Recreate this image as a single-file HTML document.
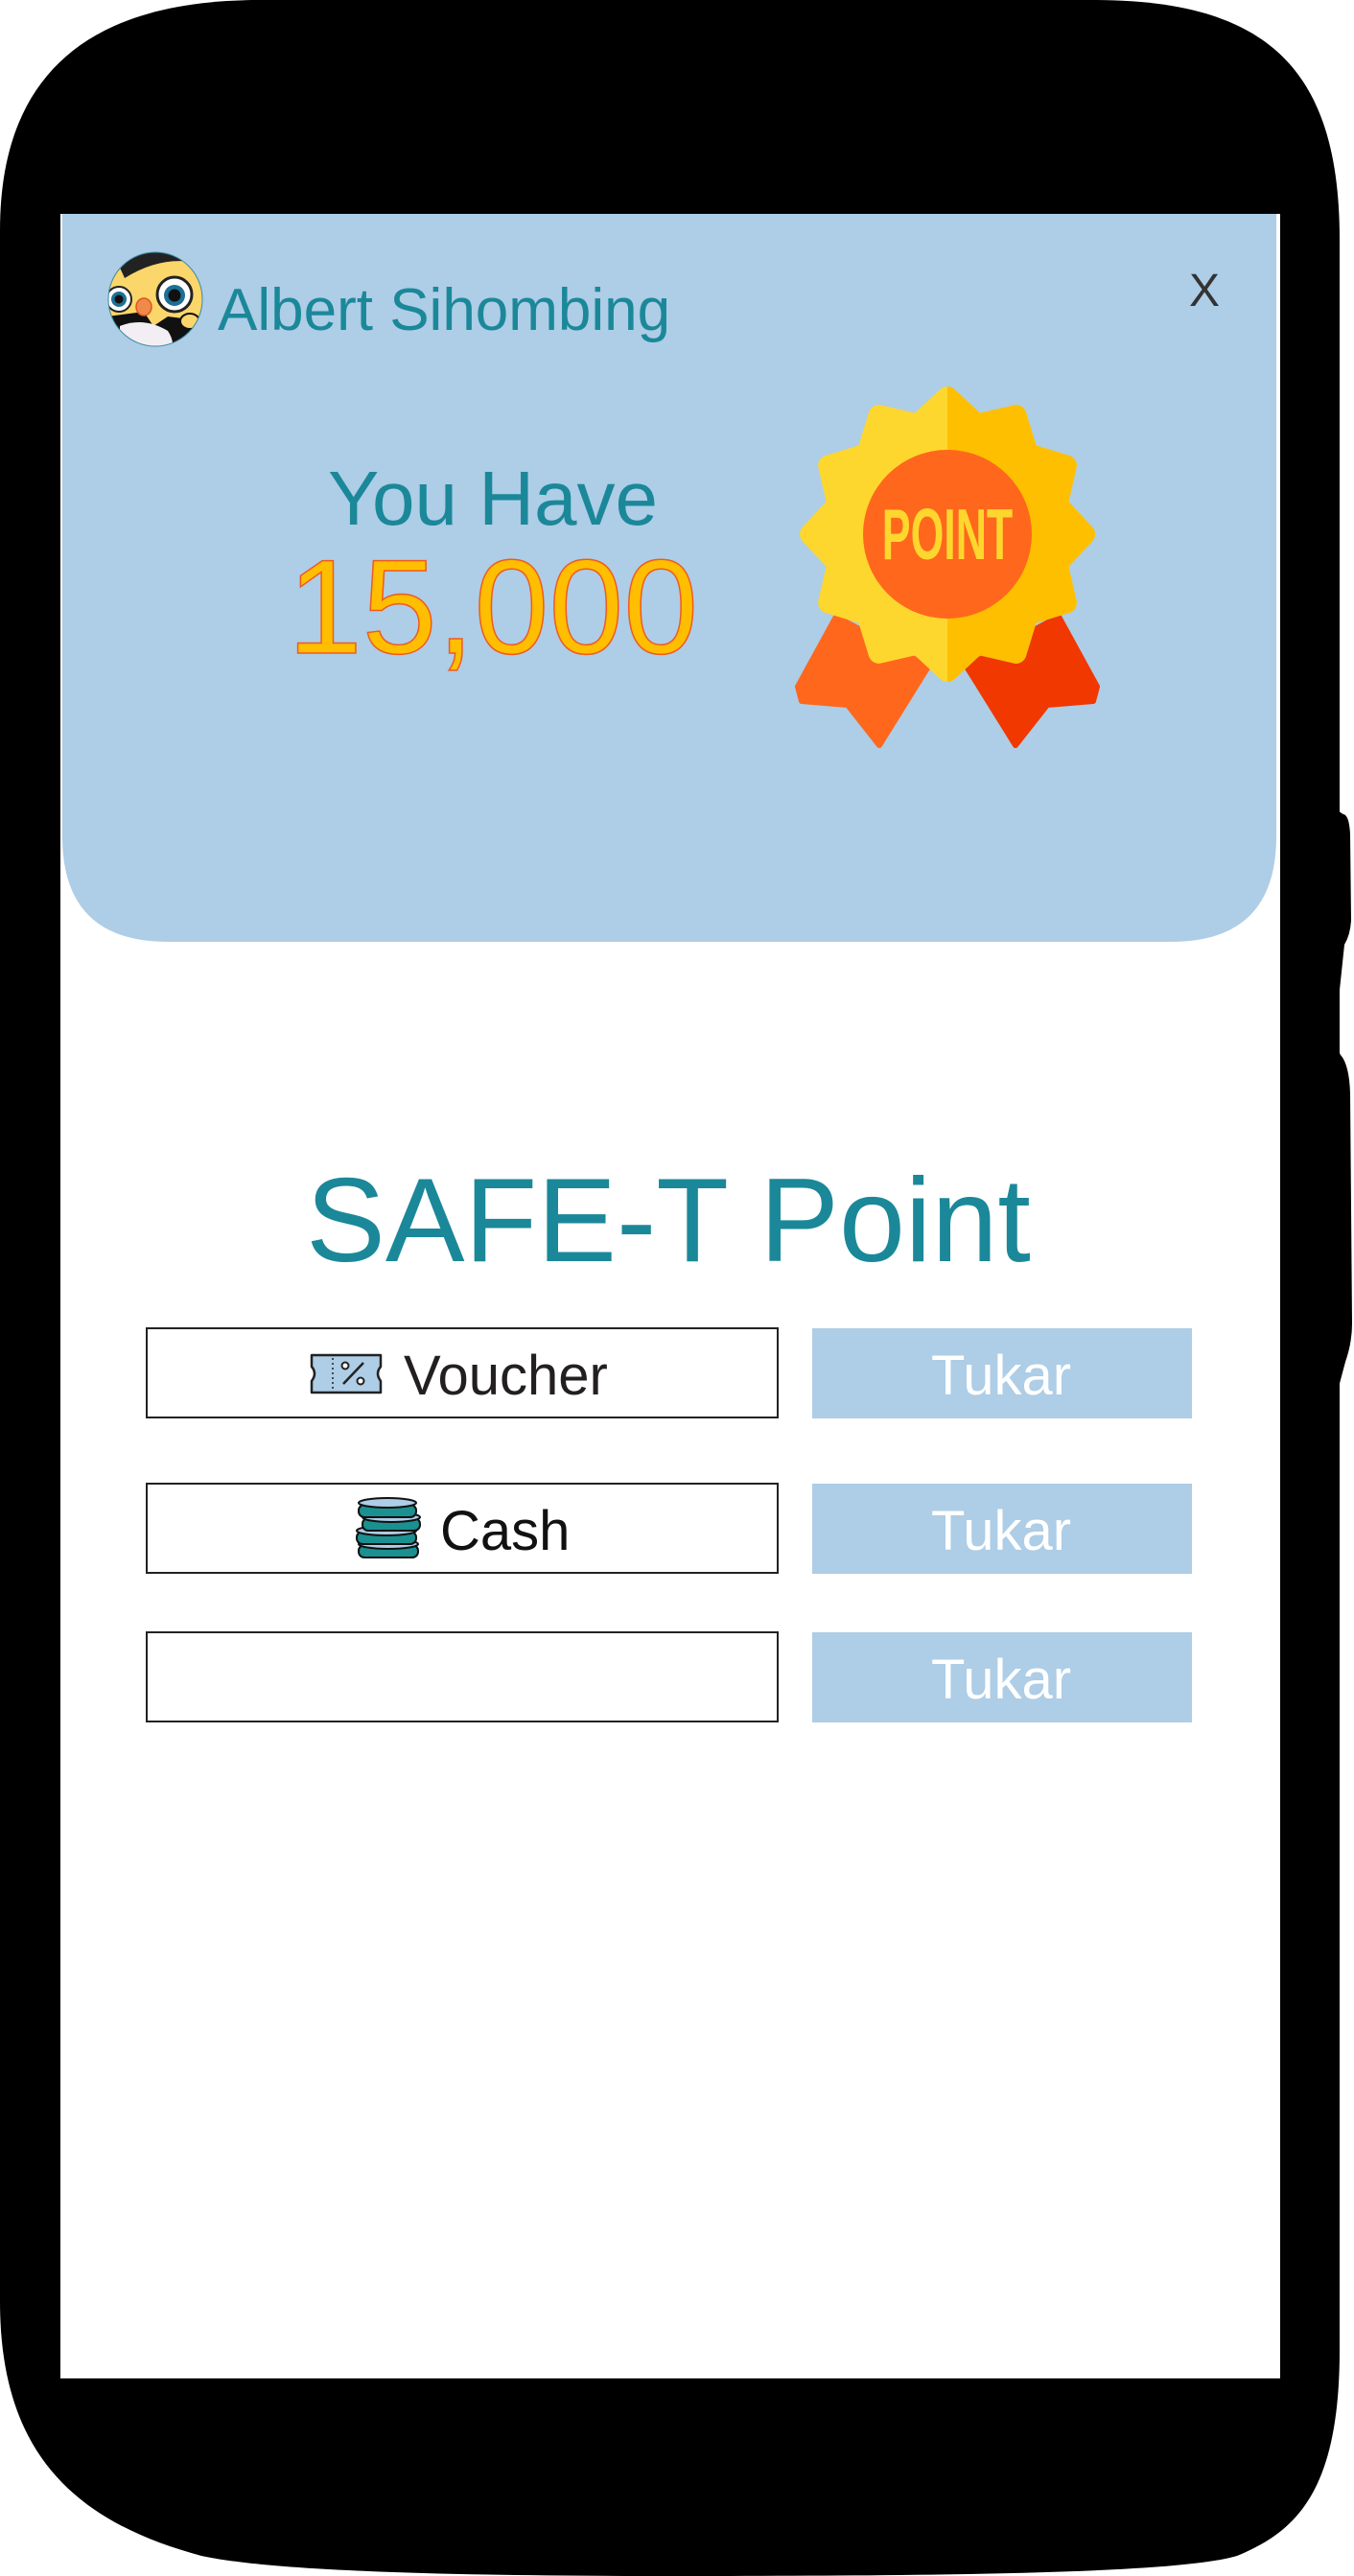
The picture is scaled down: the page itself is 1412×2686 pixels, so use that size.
<!DOCTYPE html>
<html><head><meta charset="utf-8"><style>
html,body{margin:0;padding:0;background:#fff;width:1412px;height:2686px;overflow:hidden}
svg{display:block}
text{font-family:"Liberation Sans",sans-serif}
</style></head><body>
<svg width="1412" height="2686" viewBox="0 0 1412 2686" xmlns="http://www.w3.org/2000/svg">
<defs>
<clipPath id="rh"><rect x="988" y="380" width="200" height="420"/></clipPath>
<clipPath id="av"><circle cx="162" cy="312" r="49"/></clipPath>
<g id="star">
 <circle cx="988" cy="557" r="124"/>
 <g stroke-linejoin="round" stroke-width="22">
  <polygon points="988,414 958,442 1018,442" transform="rotate(0 988 557)"/>
  <polygon points="988,414 958,442 1018,442" transform="rotate(30 988 557)"/>
  <polygon points="988,414 958,442 1018,442" transform="rotate(60 988 557)"/>
  <polygon points="988,414 958,442 1018,442" transform="rotate(90 988 557)"/>
  <polygon points="988,414 958,442 1018,442" transform="rotate(120 988 557)"/>
  <polygon points="988,414 958,442 1018,442" transform="rotate(150 988 557)"/>
  <polygon points="988,414 958,442 1018,442" transform="rotate(180 988 557)"/>
  <polygon points="988,414 958,442 1018,442" transform="rotate(210 988 557)"/>
  <polygon points="988,414 958,442 1018,442" transform="rotate(240 988 557)"/>
  <polygon points="988,414 958,442 1018,442" transform="rotate(270 988 557)"/>
  <polygon points="988,414 958,442 1018,442" transform="rotate(300 988 557)"/>
  <polygon points="988,414 958,442 1018,442" transform="rotate(330 988 557)"/>
 </g>
</g>
</defs>
<!-- phone body -->
<path d="M270 0 L1140 0 C1320 0 1397 70 1397 250 L1397 2450 C1397 2600 1350 2640 1290 2665 C1230 2683 1000 2686 700 2686 C450 2686 280 2680 210 2665 C80 2630 0 2560 0 2400 L0 240 C0 80 90 0 270 0 Z" fill="#000"/>
<path d="M1390 830 Q1392 845 1401 849 Q1407 850 1408 870 L1409 960 Q1408 975 1402 985 L1393 1070 Q1392 1090 1398 1100 Q1407 1110 1408 1140 L1410 1380 Q1410 1400 1403 1420 L1395 1450 L1380 1450 L1380 830 Z" fill="#000"/>
<!-- screen -->
<rect x="63" y="223" width="1272" height="2257" fill="#fff"/>
<path d="M65 223 L1331 223 L1331 872 Q1331 982 1221 982 L175 982 Q65 982 65 872 Z" fill="#aecde6"/>
<!-- avatar -->
<g clip-path="url(#av)">
 <circle cx="162" cy="312" r="49" fill="#fbd66a"/>
 <path d="M110 290 Q150 250 215 270 L215 262 Q160 235 110 275 Z" fill="#222"/>
 <path d="M120 268 Q165 235 210 275 Q170 265 130 290 Z" fill="#222"/>
 <path d="M112 330 L150 325 L160 340 L175 330 L215 335 L215 365 L112 365 Z" fill="#111"/>
 <path d="M125 340 Q150 330 175 345 Q185 360 175 370 L125 370 Z" fill="#f3eef4"/>
 <circle cx="124" cy="312" r="13" fill="#fff" stroke="#222" stroke-width="2"/>
 <circle cx="124" cy="312" r="8" fill="#1e6f95"/><circle cx="124" cy="312" r="4.5" fill="#111"/>
 <circle cx="182" cy="307" r="18" fill="#fff" stroke="#222" stroke-width="3"/>
 <circle cx="182" cy="308" r="11" fill="#1e6f95"/><circle cx="182" cy="308" r="6.5" fill="#111"/>
 <ellipse cx="150" cy="320" rx="8" ry="9" fill="#f08a4b" stroke="#e0551e" stroke-width="1.5"/>
 <ellipse cx="198" cy="335" rx="10" ry="8" fill="#fbd66a" stroke="#111" stroke-width="2"/>
</g>
<circle cx="162" cy="312" r="49" fill="none" stroke="#3d8aa0" stroke-width="1"/>
<text x="227" y="344" font-size="62" fill="#1b8899">Albert Sihombing</text>
<text x="1240" y="319" font-size="48" fill="#333">X</text>
<text x="514" y="547" font-size="80" fill="#1b8899" text-anchor="middle">You Have</text>
<text x="514" y="681" font-size="140" fill="#ffbe00" stroke="#f05a1e" stroke-width="1.5" text-anchor="middle">15,000</text>
<!-- medal -->
<polygon points="872,643 832,716 836,731 884,735 917,777 968,695" fill="#ff671d" stroke="#ff671d" stroke-width="6" stroke-linejoin="round"/>
<polygon points="1104,643 1144,716 1140,731 1092,735 1059,777 1008,695" fill="#f03800" stroke="#f03800" stroke-width="6" stroke-linejoin="round"/>
<use href="#star" fill="#fdd72e" stroke="#fdd72e"/>
<use href="#star" fill="#fdbf00" stroke="#fdbf00" clip-path="url(#rh)"/>
<circle cx="988" cy="557" r="88" fill="#ff671d"/>
<text x="988" y="583" font-size="72" fill="#fdd72e" text-anchor="middle" font-weight="bold" transform="translate(988 583) scale(0.62 1.05) translate(-988 -583)">POINT</text>
<!-- title -->
<text x="697" y="1315" font-size="124" fill="#1b8899" text-anchor="middle">SAFE-T Point</text>
<!-- rows -->
<g fill="#fff" stroke="#222" stroke-width="2">
 <rect x="153" y="1385" width="658" height="93"/>
 <rect x="153" y="1547" width="658" height="93"/>
 <rect x="153" y="1702" width="658" height="93"/>
</g>
<g fill="#aecde6">
 <rect x="847" y="1385" width="396" height="94"/>
 <rect x="847" y="1547" width="396" height="94"/>
 <rect x="847" y="1702" width="396" height="94"/>
</g>
<g font-size="58" fill="#fff" text-anchor="middle">
 <text x="1044" y="1454">Tukar</text>
 <text x="1044" y="1616">Tukar</text>
 <text x="1044" y="1771">Tukar</text>
</g>
<text x="421" y="1454" font-size="58" fill="#231f20">Voucher</text>
<text x="459" y="1616" font-size="58" fill="#111">Cash</text>
<!-- voucher icon -->
<path d="M325 1413 L397 1413 L397 1425 Q391 1432 397 1440 L397 1452 L325 1452 L325 1440 Q331 1432 325 1425 Z" fill="#aecde6" stroke="#222" stroke-width="2.5" stroke-linejoin="round"/>
<line x1="347" y1="1416" x2="347" y2="1450" stroke="#222" stroke-width="1.5" stroke-dasharray="2 3"/>
<circle cx="360" cy="1424" r="3.5" fill="#fff" stroke="#222" stroke-width="2"/>
<circle cx="376" cy="1440" r="3.5" fill="#fff" stroke="#222" stroke-width="2"/>
<line x1="358" y1="1443" x2="379" y2="1421" stroke="#222" stroke-width="2.5"/>
<!-- coins -->
<g stroke="#111" stroke-width="2">
 <rect x="374" y="1611" width="62" height="13" rx="6" fill="#1a9090"/><ellipse cx="405" cy="1610" rx="31" ry="5" fill="#aecde6"/>
 <rect x="372" y="1597" width="62" height="13" rx="6" fill="#1a9090"/><ellipse cx="403" cy="1596" rx="31" ry="5" fill="#aecde6"/>
 <rect x="378" y="1583" width="60" height="13" rx="6" fill="#1a9090"/><ellipse cx="408" cy="1582" rx="30" ry="5" fill="#aecde6"/>
 <rect x="374" y="1569" width="60" height="13" rx="6" fill="#1a9090"/><ellipse cx="404" cy="1567" rx="30" ry="5" fill="#aecde6"/>
</g>
</svg>
</body></html>
